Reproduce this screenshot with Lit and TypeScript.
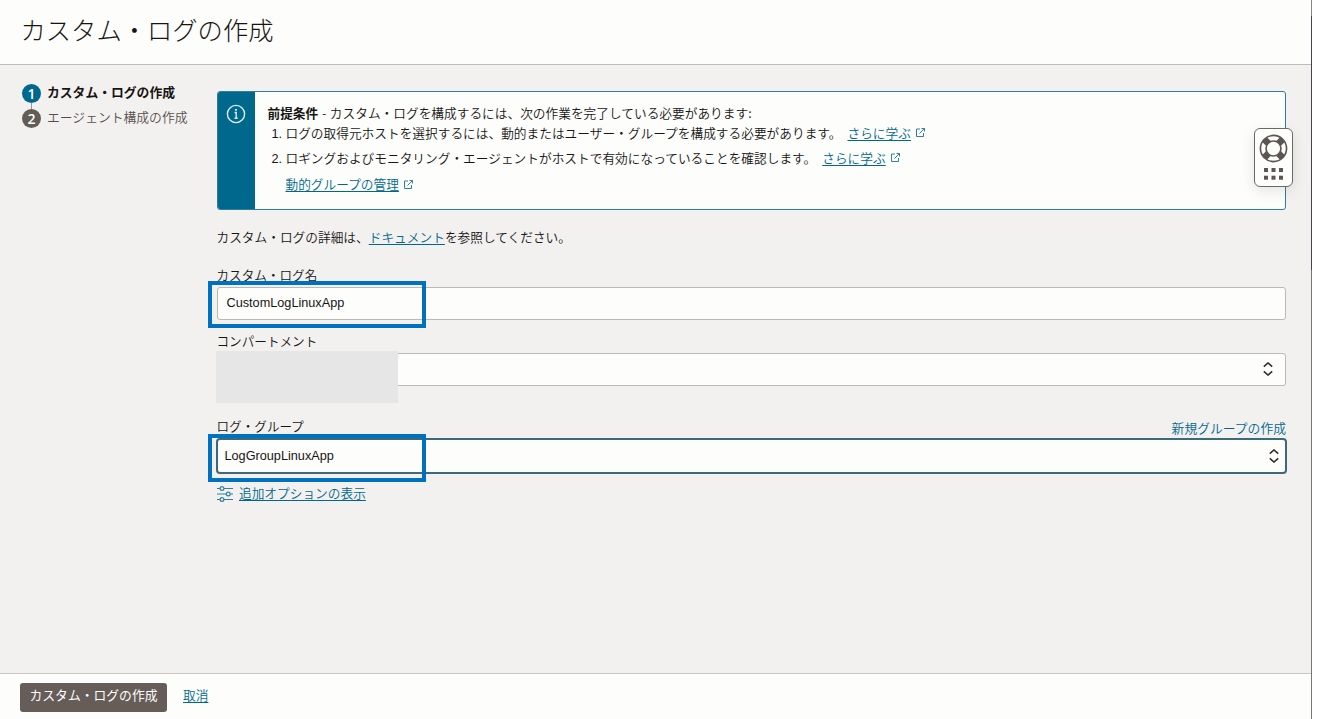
import { LitElement, html, css, svg } from "lit";
import { customElement } from "lit/decorators.js";

const external = html`<svg class="ext" width="11" height="11" viewBox="0 0 11 11">
  <path d="M5 2H1.500v7.500H8.500V6M6.500 1.500h3v3M9.500 1.500L4.500 6.500" />
</svg>`;

const updown = html`<svg class="updown" width="10" height="14" viewBox="0 0 10 14">
  <path d="M.8 4.600L5 1l4.200 3.600M.8 9.400L5 13l4.200-3.600" />
</svg>`;

@customElement("help-widget")
class HelpWidget extends LitElement {
  static styles = css`
    :host {
      display: flex;
      flex-direction: column;
      align-items: center;
      box-sizing: border-box;
      width: 39px;
      height: 59px;
      padding-top: 5px;
      background: #fdfdfc;
      border: 1px solid #6b6967;
      border-radius: 6px;
      box-shadow: 0 4px 14px rgba(0, 0, 0, 0.1);
    }
    .dots {
      margin-top: 5px;
    }
    svg {
      display: block;
    }
  `;
  render() {
    return html`
      <svg width="29" height="29" viewBox="0 0 28 28" fill="none">
        <circle cx="14" cy="14" r="10" stroke="#fdfdfc" stroke-width="6" />
        <g stroke="#5b5652">
          ${[45, 135, 225, 315].map(
            (a) => svg`<path stroke-width="6.4" d="M21 14H26.500" transform="rotate(${a} 14 14)" />`
          )}
          <circle cx="14" cy="14" r="12.600" stroke-width="1.600" />
          <circle cx="14" cy="14" r="7.200" stroke-width="1.600" />
        </g>
      </svg>
      <svg class="dots" width="19" height="12" viewBox="0 0 19 12" fill="#5b5652">
        ${[0, 7.5, 15].map(
          (x) => svg`<rect x=${x} y="0" width="4" height="4" /><rect x=${x} y="7.700" width="4" height="4" />`
        )}
      </svg>
    `;
  }
}

@customElement("app-root")
class AppRoot extends LitElement {
  static styles = css`
    :host {
      display: block;
      position: relative;
      width: 1317px;
      height: 719px;
      overflow: hidden;
      background: #fff;
      font-family: "Noto Sans CJK JP", sans-serif;
      font-weight: 350;
      font-size: 12.7px;
      line-height: 20px;
      color: #161513;
      white-space: nowrap;
    }
    * {
      box-sizing: border-box;
    }
    .page {
      width: 1312px;
      height: 719px;
      display: flex;
      flex-direction: column;
      border-right: 1px solid #77767a;
      border-image: linear-gradient(#85858a 17px, #45434f 17px, #45434f 270px, #77767a 270px) 1;
      background: #f3f1f0;
    }
    header {
      height: 65px;
      padding: 9px 0 0 20.5px;
      background: #fdfdfc;
      border-bottom: 1px solid #bfbbb8;
    }
    h1 {
      margin: 0;
      font-size: 25.3px;
      line-height: 40px;
      font-weight: 300;
    }
    .body {
      flex: 1;
      display: flex;
    }
    .steps {
      width: 216.5px;
      padding: 16px 0 0 22px;
    }
    .step {
      display: flex;
      align-items: center;
      gap: 6px;
      height: 25px;
      font-size: 12.8px;
      color: #55504c;
    }
    .step.current {
      font-weight: 700;
      color: #161513;
    }
    .step .label {
      padding-bottom: 3px;
    }
    .num {
      width: 19px;
      height: 19px;
      border-radius: 50%;
      background: #635c57;
      color: #fff;
      text-align: center;
      font: 600 14px/19px "Open Sans", sans-serif;
    }
    .current .num {
      background: #00688c;
    }
    .link-line {
      width: 1px;
      height: 6px;
      margin: -3px 0 -3px 9px;
      background: #9a9693;
    }
    main {
      width: 1069.5px;
      padding-top: 26px;
    }
    a {
      color: #00688c;
      text-decoration: underline;
      text-underline-offset: 2px;
      text-decoration-thickness: 1px;
    }
    .ext {
      margin-left: 4px;
      fill: none;
      stroke: #2f819f;
      stroke-width: 1;
    }
    .notice {
      height: 119px;
      display: flex;
      border: 1px solid #2b7f9f;
      border-radius: 3px;
      background: #fdfdfc;
      overflow: hidden;
    }
    .bar {
      width: 37.5px;
      padding: 12px 0 0 8.5px;
      background: #00688c;
    }
    .bar svg {
      display: block;
    }
    .content {
      padding: 11px 0 0 12.5px;
    }
    .lead {
      height: 20px;
    }
    .dash {
      margin: 0 0.8px;
    }
    b {
      font-weight: 700;
    }
    ol {
      list-style: none;
      margin: 0;
      padding: 0 0 0 4px;
    }
    li {
      display: flex;
      height: 25px;
    }
    .mark {
      width: 14px;
      padding-top: 1px;
      font-family: "Liberation Sans", sans-serif;
      font-weight: 400;
    }
    li a {
      margin-left: 6px;
    }
    li .ext {
      margin-top: 4px;
    }
    .manage {
      display: flex;
      padding-left: 18px;
      margin-top: 1px;
    }
    .manage .ext {
      margin-top: 5px;
    }
    .detail {
      margin-top: 17px;
      height: 20px;
    }
    .label-row {
      display: flex;
      justify-content: space-between;
      height: 20px;
      font-size: 12.6px;
    }
    .name-label {
      margin-top: 18px;
    }
    .comp-label {
      margin-top: 11px;
    }
    .group-label {
      margin-top: 30px;
    }
    .create {
      color: #00688c;
      padding-top: 2px;
      font-size: 12.8px;
    }
    .field {
      display: flex;
      align-items: center;
      justify-content: space-between;
      height: 33px;
      padding: 0 12px 2px 9px;
      background: #fdfdfc;
      border: 1px solid #bbb8b5;
      border-radius: 3px;
      font: 400 12.7px/20px "Liberation Sans", sans-serif;
    }
    .name-field {
      margin-top: 2px;
    }
    .comp-field {
      margin-top: 2px;
    }
    .group-field {
      margin: 2px -1px 0;
      height: 36px;
      padding: 0 6px 0 7px;
      border: 2px solid #3c6a76;
      border-radius: 4px;
    }
    .updown {
      fill: none;
      stroke: #302d2a;
      stroke-width: 1.6;
    }
    .more {
      display: flex;
      gap: 6px;
      margin-top: 9px;
      padding-left: 0.5px;
    }
    .more svg {
      margin-top: 3px;
    }
    footer {
      display: flex;
      height: 46px;
      padding: 9px 0 0 20px;
      gap: 16px;
      background: #fdfdfc;
      border-top: 1px solid #c9c5c2;
    }
    button {
      width: 147px;
      height: 29px;
      padding: 0 0 5px;
      border: 0;
      border-radius: 3px;
      background: #665d59;
      color: #fff;
      font: inherit;
      font-size: 12.8px;
      font-weight: 400;
    }
    footer a {
      padding-top: 2px;
    }
    .highlight {
      position: absolute;
      left: 208px;
      width: 218px;
      border: 4px solid #0070c0;
    }
    .highlight.first {
      top: 281px;
      height: 47px;
    }
    .highlight.second {
      top: 434px;
      height: 48px;
    }
    .mask {
      position: absolute;
      left: 216px;
      top: 351px;
      width: 182px;
      height: 52px;
      background: #e6e6e6;
    }
    help-widget {
      position: absolute;
      left: 1254px;
      top: 128px;
    }
  `;

  render() {
    return html`
      <div class="page">
        <header><h1>カスタム・ログの作成</h1></header>
        <div class="body">
          <nav class="steps">
            <div class="step current"><span class="num">1</span><span class="label">カスタム・ログの作成</span></div>
            <div class="link-line"></div>
            <div class="step"><span class="num">2</span><span class="label">エージェント構成の作成</span></div>
          </nav>
          <main>
            <section class="notice">
              <div class="bar">
                <svg width="20" height="20" viewBox="0 0 20 20" fill="none" stroke="#d9eef5">
                  <circle cx="10" cy="10" r="8.600" stroke-width="1.400" />
                  <path d="M8.500 8.500h1.700v6M8.500 14.200h3.200" stroke-width="1.400" />
                  <path d="M10 5v1.800" stroke-width="1.900" />
                </svg>
              </div>
              <div class="content">
                <div class="lead"><b>前提条件</b><span class="dash"> - </span>カスタム・ログを構成するには、次の作業を完了している必要があります:</div>
                <ol>
                  <li>
                    <span class="mark">1.</span>ログの取得元ホストを選択するには、動的またはユーザー・グループを構成する必要があります。
                    <a>さらに学ぶ</a>${external}
                  </li>
                  <li>
                    <span class="mark">2.</span>ロギングおよびモニタリング・エージェントがホストで有効になっていることを確認します。
                    <a>さらに学ぶ</a>${external}
                  </li>
                </ol>
                <div class="manage"><a>動的グループの管理</a>${external}</div>
              </div>
            </section>
            <div class="detail">カスタム・ログの詳細は、<a>ドキュメント</a>を参照してください。</div>
            <div class="label-row name-label">カスタム・ログ名</div>
            <div class="field name-field">CustomLogLinuxApp</div>
            <div class="label-row comp-label">コンパートメント</div>
            <div class="field comp-field"><span></span>${updown}</div>
            <div class="label-row group-label"><span>ログ・グループ</span><span class="create">新規グループの作成</span></div>
            <div class="field group-field">LogGroupLinuxApp${updown}</div>
            <div class="more">
              <svg width="16" height="16" viewBox="0 0 16 16" fill="none" stroke="#2f819f" stroke-width="1.200">
                <path d="M0 2.500h3M7 2.500h9M0 8h9M13.500 8H16M0 13.500h3M7 13.500h9" />
                <circle cx="5" cy="2.500" r="1.900" />
                <circle cx="11.300" cy="8" r="1.900" />
                <circle cx="5" cy="13.500" r="1.900" />
              </svg>
              <a>追加オプションの表示</a>
            </div>
          </main>
        </div>
        <footer><button>カスタム・ログの作成</button><a>取消</a></footer>
      </div>
      <div class="mask"></div>
      <div class="highlight first"></div>
      <div class="highlight second"></div>
      <help-widget></help-widget>
    `;
  }
}
